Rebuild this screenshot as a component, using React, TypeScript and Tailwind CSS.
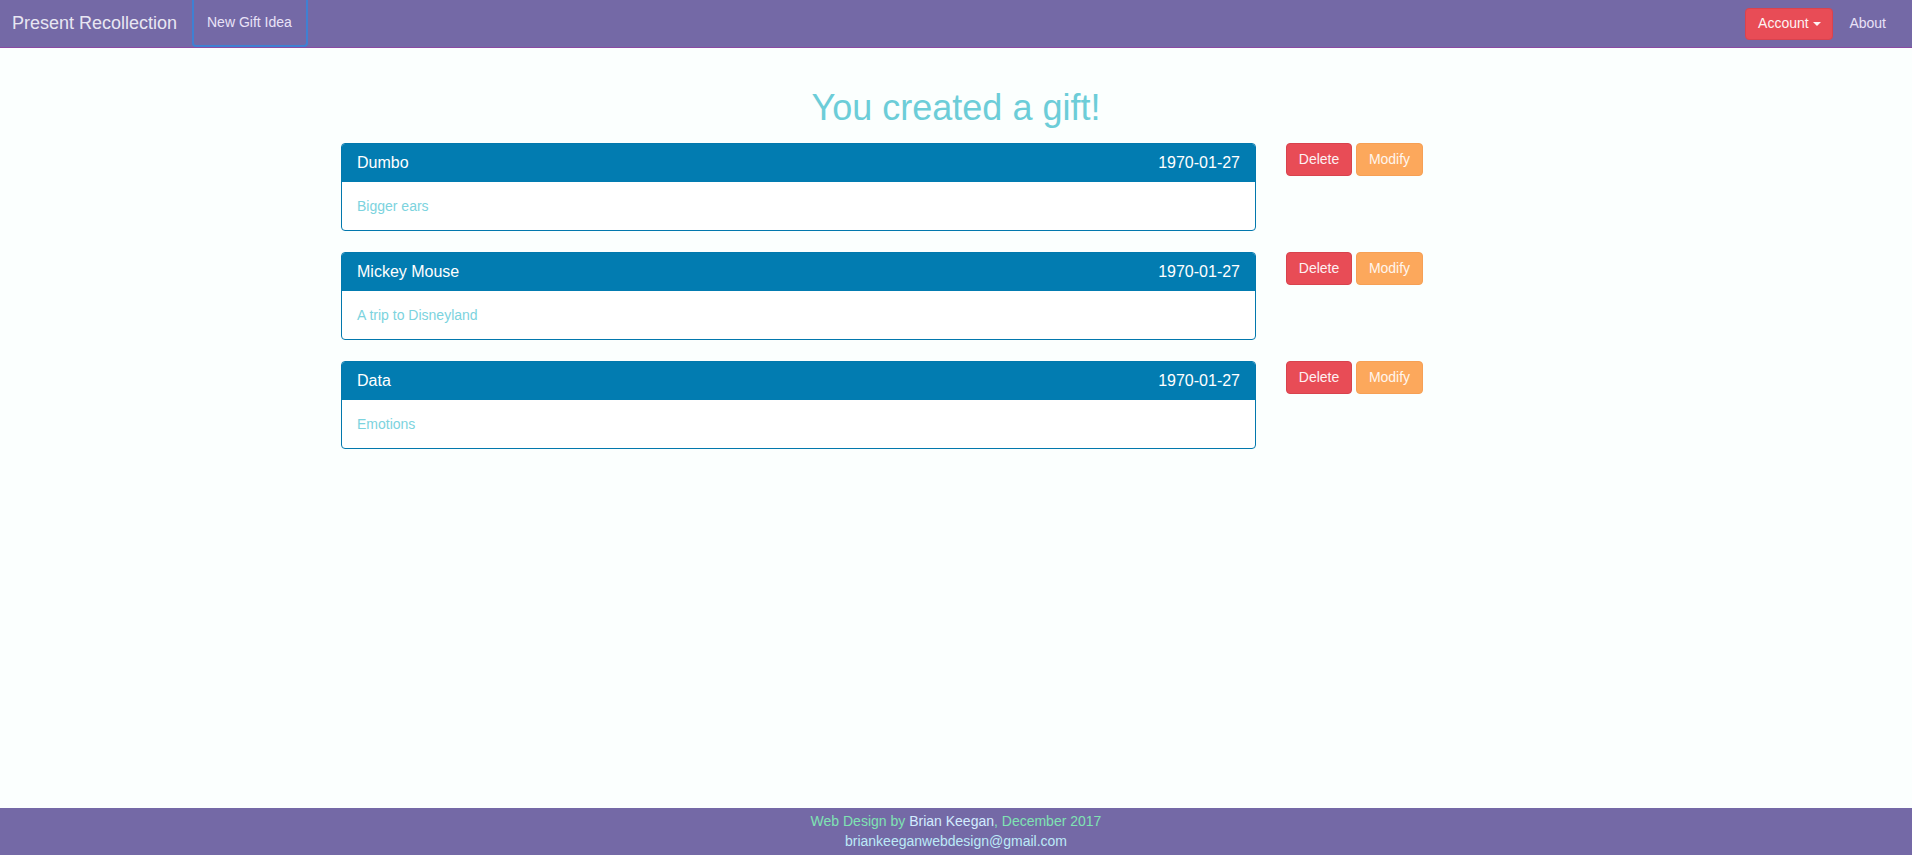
const gifts = [
  { name: "Dumbo", date: "1970-01-27", idea: "Bigger ears" },
  { name: "Mickey Mouse", date: "1970-01-27", idea: "A trip to Disneyland" },
  { name: "Data", date: "1970-01-27", idea: "Emotions" },
]

function Navbar() {
  return (
    <nav className="h-[48px] bg-[#7469a6] border-b border-[#8b4aa3] flex items-stretch">
      <a className="w-[192px] pl-[12px] flex items-center text-[18px] text-[#e8e6f2]">Present Recollection</a>
      <a className="w-[116px] pl-[13px] flex items-center text-[14px] text-[#e9e2f7] border-x-2 border-b-2 border-[#3f80d2] rounded-b-[4px]">
        New Gift Idea
      </a>
      <div className="ml-auto flex items-center">
        <button className="h-[32px] w-[88px] rounded-[4px] bg-[#e84c56] border border-[#d9434e] text-[14px] text-[#fdf3f4] flex items-center justify-center gap-[4px]">
          Account
          <span className="w-0 h-0 border-x-[4px] border-x-transparent border-t-[4px] border-t-[#fdf3f4]" />
        </button>
        <a className="ml-[16px] mr-[26px] text-[14px] text-[#e9e2f7]">About</a>
      </div>
    </nav>
  )
}

function GiftCard({ name, date, idea }: { name: string; date: string; idea: string }) {
  return (
    <div className="flex items-start">
      <div className="w-[915px] border border-[#0278ad] rounded-[4px] overflow-hidden bg-white">
        <div className="h-[38px] bg-[#027cb1] flex items-center justify-between pl-[15px] pr-[15px] text-[16px] text-white">
          <span>{name}</span>
          <span>{date}</span>
        </div>
        <div className="h-[48px] flex items-center pl-[15px] text-[14px] text-[#7cd3de]">{idea}</div>
      </div>
      <div className="ml-[30px] flex gap-[4px]">
        <button className="h-[33px] w-[66px] rounded-[4px] bg-[#e84c56] border border-[#d8434d] text-[14px] text-[#fdf1f2]">
          Delete
        </button>
        <button className="h-[33px] w-[67px] rounded-[4px] bg-[#fca85c] border border-[#f6a055] text-[14px] text-[#fff6ee]">
          Modify
        </button>
      </div>
    </div>
  )
}

export default function App() {
  return (
    <div className="min-h-screen flex flex-col bg-[#fbfffe] font-['Liberation_Sans',Arial,sans-serif]">
      <Navbar />
      <main className="flex-1">
        <h1 className="mt-[40px] mb-[15px] text-center text-[36px] leading-[40px] text-[#6ccdd8]">You created a gift!</h1>
        <div className="ml-[341px] flex flex-col gap-[21px]">
          {gifts.map((gift, index) => (
            <GiftCard key={index} {...gift} />
          ))}
        </div>
      </main>
      <footer className="h-[47px] bg-[#7469a6] pt-[3px] text-center text-[14px] leading-[20px]">
        <div className="text-[#7fe3b3]">
          Web Design by <span className="text-[#d2ecff]">Brian Keegan</span>, December 2017
        </div>
        <div className="text-[#bce9f7]">briankeeganwebdesign@gmail.com</div>
      </footer>
    </div>
  )
}
